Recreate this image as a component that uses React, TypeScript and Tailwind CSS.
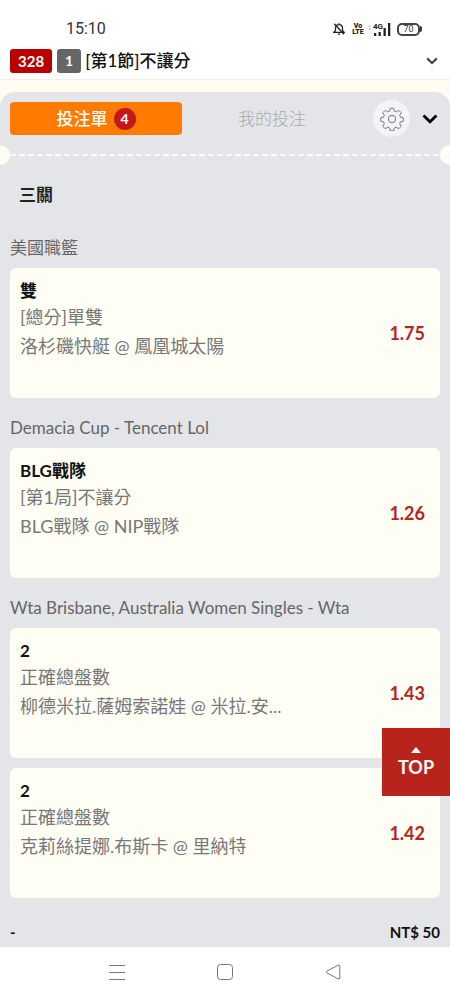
import React, { useState } from 'react';

interface Bet {
  id: number;
  pick: string;
  market: string;
  match: string;
  odds: string;
}

interface League {
  name: string;
  bets: Bet[];
}

const leagues: League[] = [
  {
    name: '美國職籃',
    bets: [{ id: 1, pick: '雙', market: '[總分]單雙', match: '洛杉磯快艇 @ 鳳凰城太陽', odds: '1.75' }]
  },
  {
    name: 'Demacia Cup - Tencent Lol',
    bets: [{ id: 2, pick: 'BLG戰隊', market: '[第1局]不讓分', match: 'BLG戰隊 @ NIP戰隊', odds: '1.26' }]
  },
  {
    name: 'Wta Brisbane, Australia Women Singles - Wta',
    bets: [
      { id: 3, pick: '2', market: '正確總盤數', match: '柳德米拉.薩姆索諾娃 @ 米拉.安...', odds: '1.43' },
      { id: 4, pick: '2', market: '正確總盤數', match: '克莉絲提娜.布斯卡 @ 里納特', odds: '1.42' }
    ]
  }
];

function StatusBar() {
  return (
    <div className="flex items-center justify-between pt-[18px] pb-1 pl-[66px] pr-7 font-['Roboto',sans-serif] text-[#333]">
      <span className="text-[16px] leading-[22px]">15:10</span>
      <div className="flex items-center">
        <svg className="mr-2 h-3 w-3" viewBox="0 0 12 12" fill="none" stroke="#222" strokeWidth="1.3">
          <path d="M.8 9.300L2.500 7.500V5.200C2.500 3 4 1.700 6 1.700s3.500 1.300 3.500 3.500v2.300l1.700 1.800zM6 .3v1.400M5 11.200h2M1.300 .8l9.700 10.400" />
        </svg>
        <span className="mr-1 flex w-2.5 flex-col items-center text-[7px] font-black leading-[6px] text-[#222]">
          <span>Vo</span>
          <span>LTE</span>
        </span>
        <div className="relative mr-1.5 h-[13px] w-6">
          <span className="absolute left-1.5 top-0 text-[8px] font-bold leading-[7px] text-[#222]">4G</span>
          <svg className="h-[13px] w-6" viewBox="0 0 24 13" fill="#222">
            <path d="M7 10h2.300v3H7zM11.500 9h2.300v4h-2.300zM16.500 5h2.300v8h-2.300zM21 0h2.300v13H21z" />
            <path d="M1 4l1.500-2L4 4zM1 5.500h3L2.500 7.500z" fill="#bbb" />
          </svg>
        </div>
        <div className="flex items-center">
          <span className="flex h-[13px] w-[23px] items-center justify-center rounded-[5px] border-2 border-[#444] text-[9px] leading-none">
            70
          </span>
          <span className="h-1.5 w-0.5 rounded-r-sm bg-[#333]" />
        </div>
      </div>
    </div>
  );
}

function Chevron({ className }: { className: string }) {
  return (
    <svg className={className} viewBox="0 0 16 10" fill="none" stroke="currentColor" strokeWidth="2.800">
      <path d="M1.500 1.500L8 7.800l6.500-6.300" />
    </svg>
  );
}

function GearIcon() {
  return (
    <svg className="h-6 w-6" viewBox="0 0 24 24" fill="none" stroke="#777" strokeWidth="1" strokeLinejoin="round">
      <circle cx="12" cy="12" r="3.700" />
      <path d="M10.300 1.200h3.400l.6 2.800 2 .8 2.500-1.500 2.400 2.400-1.500 2.500.8 2 2.800.6v3.400l-2.800.6-.8 2 1.500 2.500-2.400 2.400-2.500-1.500-2 .8-.6 2.800h-3.400l-.6-2.800-2-.8-2.500 1.500-2.400-2.400 1.500-2.500-.8-2-2.800-.6v-3.400l2.800-.6.8-2-1.500-2.500 2.400-2.400 2.500 1.500 2-.8z" />
    </svg>
  );
}

function BetCard({ bet }: { bet: Bet }) {
  return (
    <li className="flex items-center justify-between rounded-md bg-[#fffef5] px-2.5 pr-[15px]">
      <div className="min-w-0 pt-2.5 pb-9">
        <h3 className="text-[17px] font-bold leading-[26px] text-[#111]">{bet.pick}</h3>
        <p className="text-[18px] leading-[26px] text-[#777]">{bet.market}</p>
        <p className="truncate text-[18px] leading-8 text-[#777]">{bet.match}</p>
      </div>
      <span className="text-[18px] font-bold leading-6 text-[#b3251e]">{bet.odds}</span>
    </li>
  );
}

export default function App() {
  const [tab, setTab] = useState('slip');

  return (
    <div className="flex min-h-screen flex-col bg-white font-['Lato','Noto_Sans_CJK_TC',sans-serif]">
      <StatusBar />

      <header className="flex items-center border-b border-[#eee] px-2.5 pt-[5px] pb-1.5">
        <span className="rounded-[3px] bg-[#b90000] px-2 text-[15px] font-bold leading-6 text-white">328</span>
        <span className="ml-[5px] rounded-[3px] bg-[#666] px-2 text-[14px] font-bold leading-6 text-white">1</span>
        <h1 className="ml-1 flex-1 text-[17px] font-medium leading-6 text-[#111]">[第1節]不讓分</h1>
        <button type="button" aria-label="展開" className="px-0.5 text-[#444]">
          <Chevron className="h-2 w-3" />
        </button>
      </header>

      <div className="flex flex-1 flex-col bg-[#fffdf3] pt-3">
        <main className="flex flex-1 flex-col overflow-hidden rounded-t-[15px] bg-[#e4e5e8]">
          <div className="flex items-center px-2.5 pt-2">
            <div className="grid flex-1 grid-cols-2 gap-2">
              <button
                type="button"
                onClick={() => setTab('slip')}
                aria-pressed={tab === 'slip'}
                className="flex h-[33px] items-center justify-center gap-1.5 rounded bg-[#ff7b00] text-[17px] font-medium text-white"
              >
                投注單
                <span className="h-[22px] w-[22px] rounded-full bg-[#c4161c] text-[14px] font-bold leading-[22px]">4</span>
              </button>
              <button
                type="button"
                onClick={() => setTab('mine')}
                aria-pressed={tab === 'mine'}
                className="h-[33px] pr-2 text-[17px] font-light text-[#aaa]"
              >
                我的投注
              </button>
            </div>
            <button
              type="button"
              aria-label="設定"
              className="ml-[11px] flex h-[37px] w-[37px] items-center justify-center rounded-full bg-[#f3f4f8]"
            >
              <GearIcon />
            </button>
            <button type="button" aria-label="收合" className="ml-3 mr-0.5 text-black">
              <Chevron className="h-2.5 w-4" />
            </button>
          </div>

          <div className="mt-2 flex items-center">
            <span className="-ml-2.5 h-5 w-5 rounded-full bg-[#fffdf3]" />
            <span className="h-0.5 flex-1 bg-[repeating-linear-gradient(90deg,#fffdf3_0_6px,transparent_6px_9px)]" />
            <span className="-mr-2.5 h-5 w-5 rounded-full bg-[#fffdf3]" />
          </div>

          <h2 className="px-[19px] pt-[17px] pb-2.5 text-[17px] font-bold leading-[26px] text-[#222]">三關</h2>

          {leagues.map((league) => (
            <section key={league.name} className="px-2.5">
              <h2 className="pt-5 pb-2.5 text-[17px] leading-5 text-[#666]">{league.name}</h2>
              <ul className="space-y-2.5">
                {league.bets.map((bet) => (
                  <BetCard key={bet.id} bet={bet} />
                ))}
              </ul>
            </section>
          ))}

          <div className="flex justify-between px-2.5 pt-6 pb-1 text-[15px] font-bold leading-5 text-[#111]">
            <span>-</span>
            <span>NT$ 50</span>
          </div>
        </main>
      </div>

      <a
        href="#"
        className="fixed right-0 bottom-[204px] flex h-[68px] w-[68px] flex-col items-center justify-center bg-[#b8241c] text-[18px] font-bold leading-6 text-white"
      >
        <svg className="mt-1 h-1.5 w-2.5" viewBox="0 0 10 6" fill="currentColor">
          <path d="M5 0l5 6H0z" />
        </svg>
        <span className="leading-7">TOP</span>
      </a>

      <nav className="flex items-center justify-center gap-[92px] bg-white pt-[17px] pb-5">
        <button type="button" aria-label="選單">
          <svg className="h-4 w-4" viewBox="0 0 16 16" fill="none" stroke="#777">
            <path d="M0 1.500h16M0 8.500h16M0 15.500h16" />
          </svg>
        </button>
        <button type="button" aria-label="主畫面">
          <svg className="h-4 w-4" viewBox="0 0 16 16" fill="none" stroke="#777">
            <rect x=".5" y=".5" width="15" height="15" rx="3" />
          </svg>
        </button>
        <button type="button" aria-label="返回">
          <svg className="h-4 w-4" viewBox="0 0 16 16" fill="none" stroke="#777" strokeLinejoin="round">
            <path d="M1.600 7.300L13 1.300q1.800-.8 1.800 1v11.500q0 1.800-1.800 1L1.600 8.800q-1-.8 0-1.500z" />
          </svg>
        </button>
      </nav>
    </div>
  );
}
